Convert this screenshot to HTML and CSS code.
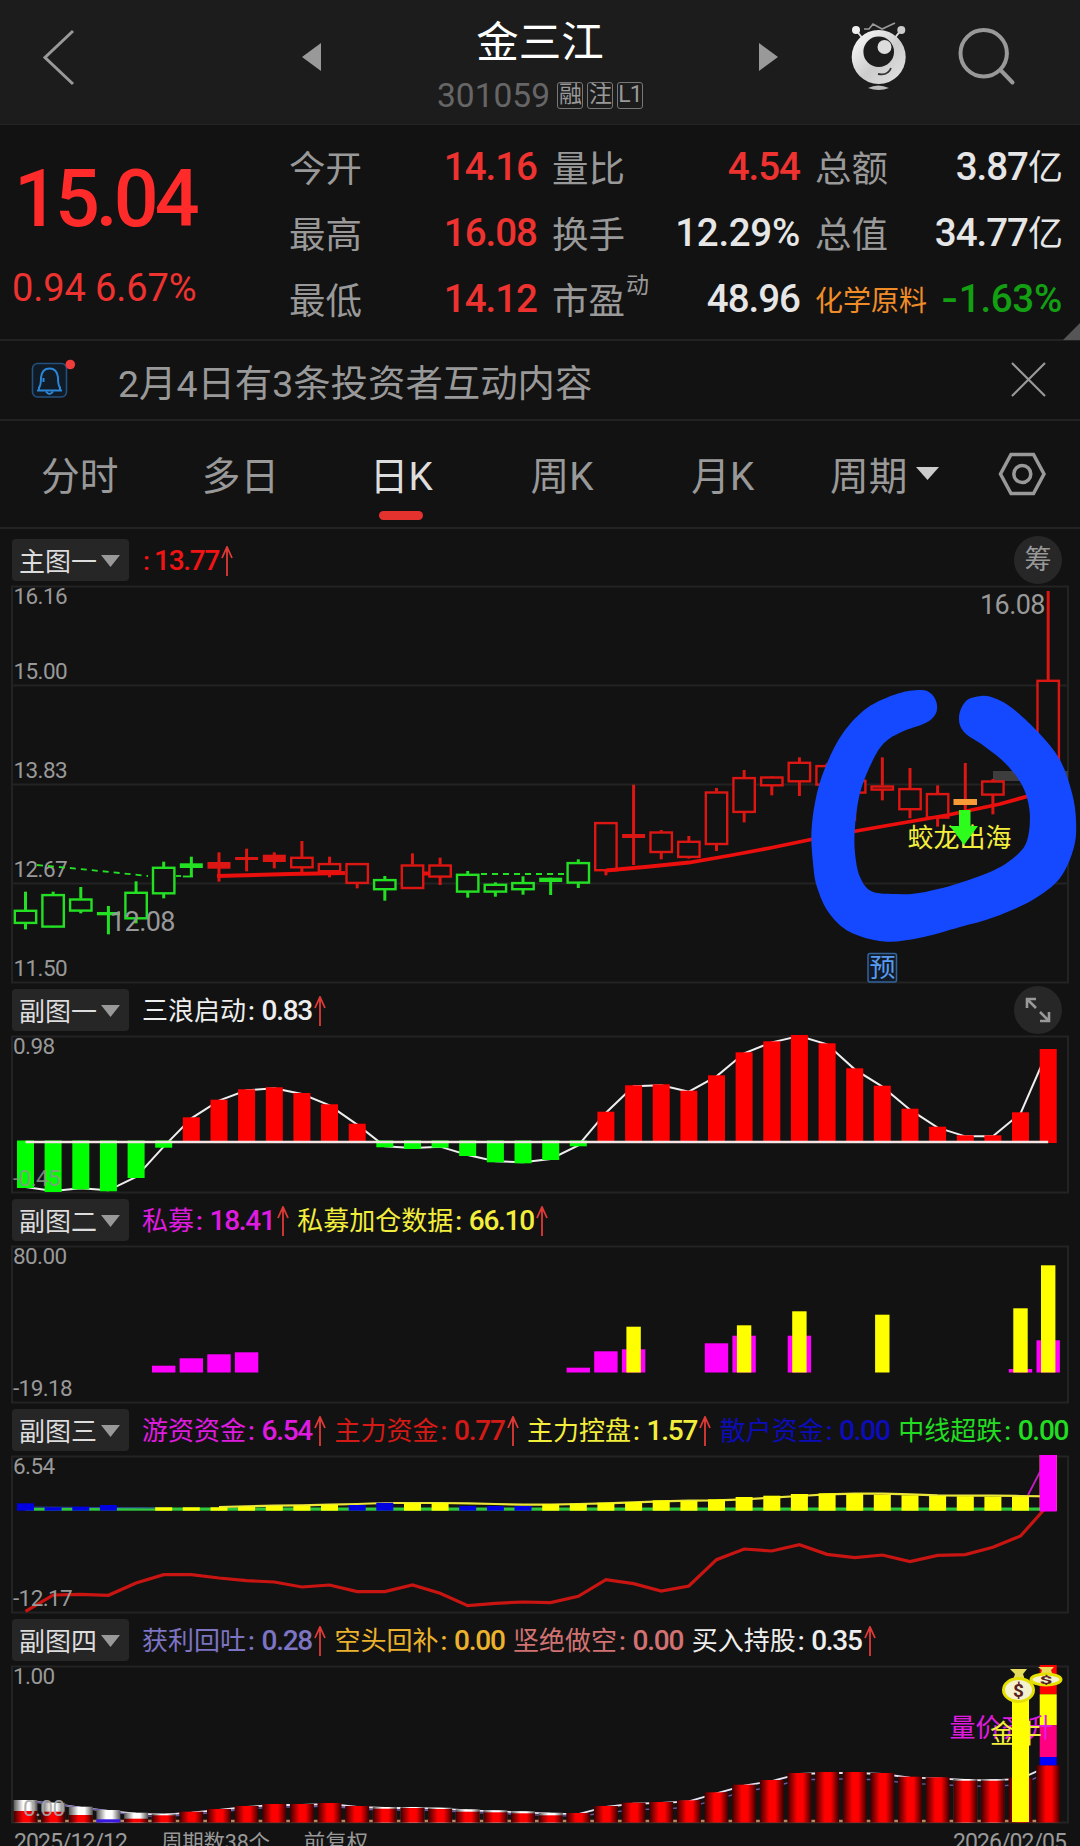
FILE: index.html
```
<!DOCTYPE html>
<html lang="zh-CN">
<head>
	<meta charset="utf-8">
	<title>金三江 301059</title>
	<link rel="stylesheet" href="styles.css">
</head>
<body>

<header class="topbar">
	<svg class="back" width="34" height="60" viewBox="41 27 34 60"><path d="M72 31L44 57.5L72 84"/></svg>
	<svg class="step prev" width="20" height="30" viewBox="0 0 20 30"><path d="M19 1v28L0 15z"/></svg>
	<div class="stock">
		<h1>金三江</h1>
		<div class="code"><span>301059</span><i>融</i><i>注</i><i>L1</i></div>
	</div>
	<svg class="step next" width="20" height="30" viewBox="0 0 20 30"><path d="M1 1v28l19-14z"/></svg>
	<svg class="robot" width="60" height="72" viewBox="850 22 60 72">
		<defs>
			<linearGradient id="shell" x1="0" y1="0" x2="1" y2="1">
				<stop offset="0" stop-color="#fff"/>
				<stop offset=".55" stop-color="#ccc"/>
				<stop offset="1" stop-color="#e4e4e4"/>
			</linearGradient>
		</defs>
		<path d="M857 31l7 9M902 31l-7 9" stroke="#ddd" stroke-width="2"/>
		<path d="M865 30h5l4-5 9 5 13-6" fill="none" stroke="#999" stroke-width="1.6"/>
		<circle cx="857" cy="31" r="4" fill="#eee"/>
		<circle cx="902.3" cy="31" r="4" fill="#ccc"/>
		<circle cx="879.7" cy="58" r="27" fill="url(#shell)"/>
		<circle cx="879.7" cy="52.7" r="15.3" fill="#1c1c1c"/>
		<circle cx="885.5" cy="48" r="7" fill="#ddd"/>
		<path d="M879 75q10 2 13-6" fill="none" stroke="#333" stroke-width="1.8"/>
		<path d="M869 89q10-5 21 0q-10 4-21 0z" fill="#bbb"/>
	</svg>
	<svg class="search" width="62" height="62" viewBox="956 27 62 62"><circle cx="983.7" cy="54.3" r="23.2"/><path d="M1000.5 71l12 12.5"/></svg>
</header>

<section class="quote">
	<div class="price">
		<b>15.04</b>
		<span>0.94 6.67%</span>
	</div>
	<dl class="stats">
		<div><dt>今开</dt><dd class="up">14.16</dd></div>
		<div><dt>量比</dt><dd class="up">4.54</dd></div>
		<div><dt>总额</dt><dd>3.87<small>亿</small></dd></div>
		<div><dt>最高</dt><dd class="up">16.08</dd></div>
		<div><dt>换手</dt><dd class="pct">12.29%</dd></div>
		<div><dt>总值</dt><dd>34.77<small>亿</small></dd></div>
		<div><dt>最低</dt><dd class="up">14.12</dd></div>
		<div><dt>市盈<sup>动</sup></dt><dd>48.96</dd></div>
		<div><dt class="sector">化学原料</dt><dd class="down pct"><u>-</u>1.63%</dd></div>
	</dl>
	<svg class="corner" width="17" height="17" viewBox="0 0 17 17"><path d="M17 0v17H0z"/></svg>
</section>

<section class="notice">
	<svg width="46" height="42" viewBox="30 357 46 42">
		<rect x="32.5" y="362.5" width="34" height="33.5" rx="5" fill="#111b26" stroke="#24507d" stroke-width="1.6"/>
		<g fill="none" stroke="#2c86d8" stroke-width="2">
			<path d="M37 389.500h25M39 389.500v-3q2-2 2-10q1-9 8.500-9q7.500 0 8.500 9q0 8 2 10v3M43.500 381v-4"/>
			<path d="M46 390.500q3.500 5 7 0"/>
		</g>
		<circle cx="70.300" cy="363.500" r="4.800" fill="#f03c3a"/>
	</svg>
	<p>2月4日有3条投资者互动内容</p>
	<svg class="close" width="35" height="35" viewBox="0 0 35 35"><path d="M1 1l33 33M34 1L1 34"/></svg>
</section>

<nav class="tabs">
	<a>分时</a>
	<a>多日</a>
	<a class="active">日K</a>
	<a>周K</a>
	<a>月K</a>
	<a class="period">周期<svg width="23" height="13" viewBox="0 0 23 13"><path d="M0 0h23L11.500 13z"/></svg></a>
	<svg class="gear" width="48" height="46" viewBox="998 452 48 46"><path d="M1011 455.500h22.500L1044 475l-10.500 19.500H1011L1000.500 475z"/><circle cx="1022.300" cy="475" r="8.500"/></svg>
</nav>

<main>
	<section class="panel">
		<header class="first">
			<button>主图一<svg class="tri" width="19" height="12" viewBox="0 0 19 12"><path d="M0 0h19L9.500 12z"/></svg></button>
			<ul><li class="c-red nameless"><em>:</em><b>13.77</b><svg class="arrow" width="12" height="30" viewBox="0 0 12 30"><path d="M6 30V1M1 12L6 1l5 11"/></svg></li></ul>
			<span class="round">筹</span>
		</header>
		<svg class="chart" width="1080" height="398" viewBox="0 585 1080 398">
			<rect class="frame" x="12" y="586.500" width="1056" height="396"/>
			<path class="grid" d="M12 685.500H1068M12 784.500H1068M12 883.500H1068"/>
			<g class="axis"><text x="13.500" y="604">16.16</text><text x="13.500" y="679">15.00</text><text x="13.500" y="778">13.83</text><text x="13.500" y="877">12.67</text><text x="13.500" y="976">11.50</text></g>
			<g id="candles"></g>
			<g class="peak"><text x="110" y="931">12.08</text><text x="980" y="613.500">16.08</text></g>
			<text class="tag" x="907.500" y="847" fill="#f3ee3c">蛟龙出海</text>
			<path d="M959 810h11.500v16h7.500L964 845l-14-19h9z" fill="#2dfc1d"/>
			<path id="scribble" fill="#1549ff"/>
			<rect x="868" y="953.500" width="28.500" height="28.500" rx="2" fill="#111b28" stroke="#34639b" stroke-width="1.500"/>
			<text class="tag" x="869.500" y="977" fill="#5a9bee">预</text>
		</svg>
	</section>

	<section class="panel">
		<header>
			<button>副图一<svg class="tri" width="19" height="12" viewBox="0 0 19 12"><path d="M0 0h19L9.500 12z"/></svg></button>
			<ul><li class="c-white">三浪启动<em>:</em><b>0.83</b><svg class="arrow" width="12" height="30" viewBox="0 0 12 30"><path d="M6 30V1M1 12L6 1l5 11"/></svg></li></ul>
			<span class="round"><svg width="26" height="26" viewBox="0 0 26 26"><path d="M11 2H2v9M2 2l9 9M24 15v9h-9M24 24l-9-9"/></svg></span>
		</header>
		<svg class="chart" width="1080" height="158" viewBox="0 1035 1080 158">
			<rect class="frame" x="12" y="1036.500" width="1056" height="156"/>
			<g id="wave"></g>
			<g class="axis"><text x="13" y="1054">0.98</text><text class="faded" x="13" y="1186">-0.45</text></g>
		</svg>
	</section>

	<section class="panel">
		<header>
			<button>副图二<svg class="tri" width="19" height="12" viewBox="0 0 19 12"><path d="M0 0h19L9.500 12z"/></svg></button>
			<ul>
				<li class="c-magenta">私募<em>:</em><b>18.41</b><svg class="arrow" width="12" height="30" viewBox="0 0 12 30"><path d="M6 30V1M1 12L6 1l5 11"/></svg></li>
				<li class="c-yellow">私募加仓数据<em>:</em><b>66.10</b><svg class="arrow" width="12" height="30" viewBox="0 0 12 30"><path d="M6 30V1M1 12L6 1l5 11"/></svg></li>
			</ul>
		</header>
		<svg class="chart" width="1080" height="158" viewBox="0 1245 1080 158">
			<rect class="frame" x="12" y="1246.500" width="1056" height="156"/>
			<g id="private"></g>
			<g class="axis"><text x="13" y="1264">80.00</text><text x="13" y="1396">-19.18</text></g>
		</svg>
	</section>

	<section class="panel">
		<header>
			<button>副图三<svg class="tri" width="19" height="12" viewBox="0 0 19 12"><path d="M0 0h19L9.500 12z"/></svg></button>
			<ul>
				<li class="c-magenta">游资资金<em>:</em><b>6.54</b><svg class="arrow" width="12" height="30" viewBox="0 0 12 30"><path d="M6 30V1M1 12L6 1l5 11"/></svg></li>
				<li class="c-darkred">主力资金<em>:</em><b>0.77</b><svg class="arrow" width="12" height="30" viewBox="0 0 12 30"><path d="M6 30V1M1 12L6 1l5 11"/></svg></li>
				<li class="c-yellow">主力控盘<em>:</em><b>1.57</b><svg class="arrow" width="12" height="30" viewBox="0 0 12 30"><path d="M6 30V1M1 12L6 1l5 11"/></svg></li>
				<li class="c-blue">散户资金<em>:</em><b>0.00</b></li>
				<li class="c-green">中线超跌<em>:</em><b>0.00</b></li>
			</ul>
		</header>
		<svg class="chart" width="1080" height="158" viewBox="0 1455 1080 158">
			<rect class="frame" x="12" y="1456.500" width="1056" height="156"/>
			<g id="funds"></g>
			<g class="axis"><text x="13" y="1474">6.54</text><text x="13" y="1606">-12.17</text></g>
		</svg>
	</section>

	<section class="panel">
		<header>
			<button>副图四<svg class="tri" width="19" height="12" viewBox="0 0 19 12"><path d="M0 0h19L9.500 12z"/></svg></button>
			<ul>
				<li class="c-purple">获利回吐<em>:</em><b>0.28</b><svg class="arrow" width="12" height="30" viewBox="0 0 12 30"><path d="M6 30V1M1 12L6 1l5 11"/></svg></li>
				<li class="c-gold">空头回补<em>:</em><b>0.00</b></li>
				<li class="c-rose">坚绝做空<em>:</em><b>0.00</b></li>
				<li class="c-white">买入持股<em>:</em><b>0.35</b><svg class="arrow" width="12" height="30" viewBox="0 0 12 30"><path d="M6 30V1M1 12L6 1l5 11"/></svg></li>
			</ul>
		</header>
		<svg class="chart" width="1080" height="158" viewBox="0 1665 1080 158">
			<defs>
				<linearGradient id="redbar">
					<stop offset="0" stop-color="#3a0000"/>
					<stop offset=".4" stop-color="#f00"/>
					<stop offset=".65" stop-color="#f00"/>
					<stop offset="1" stop-color="#3a0000"/>
				</linearGradient>
				<linearGradient id="whitebar">
					<stop offset="0" stop-color="#555"/>
					<stop offset=".4" stop-color="#fff"/>
					<stop offset=".65" stop-color="#fff"/>
					<stop offset="1" stop-color="#555"/>
				</linearGradient>
			</defs>
			<rect class="frame" x="12" y="1666.500" width="1056" height="156"/>
			<g id="holding"></g>
			<text class="tag" x="949.500" y="1737" fill="#e01be0">量价齐升</text>
			<text class="tag" x="990" y="1743" fill="#f3ee3c">金牛</text>
			<rect x="1012" y="1700" width="17" height="122" fill="#ff0"/>
			<g class="bag">
				<path d="M1010 1669h17l-4 5 2 6h-12l2-6z"/>
				<ellipse cx="1018.500" cy="1690" rx="15" ry="11.500"/>
				<text x="1018.500" y="1696.500">$</text>
			</g>
			<g class="bag">
				<path d="M1038 1667h16l-3 3 1 3h-11l1-3z"/>
				<ellipse cx="1046" cy="1679.500" rx="15" ry="5.500"/>
				<text transform="translate(1046 1683.500) scale(1.200 .6)">$</text>
			</g>
			<g class="axis"><text x="13" y="1684">1.00</text><text class="zero" x="23" y="1816">0.00</text></g>
		</svg>
	</section>
</main>

<footer>
	<span>2025/12/12</span>
	<span class="cn">周期数38个</span>
	<span class="cn">前复权</span>
	<span class="end">2026/02/05</span>
</footer>

<script src="charts.js"></script>
</body>
</html>
```
FILE: styles.css
```
* {
	box-sizing: border-box;
	margin: 0;
	padding: 0;
}

body {
	width: 1080px;
	height: 1846px;
	overflow: hidden;
	background: #121212;
	color: #999;
	font-family: Roboto, "Noto Sans CJK SC", sans-serif;
}

svg {
	display: block;
	flex: none;
}

/* top bar */
.topbar {
	display: flex;
	align-items: center;
	height: 125px;
	padding: 0 62px 0 42px;
	background: #1c1c1c;
	border-bottom: 1px solid #242424;
}

.topbar > svg {
	margin-bottom: 10px;
}

.back path {
	fill: none;
	stroke: #999;
	stroke-width: 3;
}

.step {
	fill: #999;
}

.prev {
	margin-left: 226px;
}

.stock {
	width: 436px;
	padding-top: 7px;
	text-align: center;
}

.stock h1 {
	height: 60px;
	color: #fff;
	font-size: 42.5px;
	font-weight: 400;
	line-height: 44px;
}

.code {
	display: flex;
	justify-content: center;
	align-items: center;
	gap: 4px;
	height: 30px;
	color: #666;
	font-size: 33.5px;
	line-height: 30px;
}

.code span {
	margin-right: 3px;
}

.code i {
	width: 26px;
	height: 27px;
	border: 1.5px solid #777;
	border-radius: 3px;
	color: #999;
	font-size: 23px;
	font-style: normal;
	line-height: 24px;
	letter-spacing: -1px;
}

.robot {
	margin-left: 71px;
}

.search {
	margin-left: auto;
	fill: none;
	stroke: #999;
	stroke-width: 4;
	stroke-linecap: round;
}

/* quote */
.quote {
	display: flex;
	position: relative;
	height: 216px;
	border-bottom: 2px solid #232323;
}

.price {
	width: 289px;
	padding: 33px 0 0 14px;
	color: #ff2b2b;
}

.price b {
	display: block;
	height: 91px;
	font-size: 79px;
	font-weight: 500;
	line-height: 82px;
	letter-spacing: -4px;
}

.price span {
	display: block;
	margin-left: -2px;
	color: #ee3230;
	font-size: 38px;
	line-height: 78px;
	letter-spacing: -.1px;
}

.stats {
	display: grid;
	grid-template-columns: 248px 248px 247px;
	grid-auto-rows: 66px;
	column-gap: 15px;
	padding-top: 12px;
}

.stats div {
	display: flex;
	justify-content: space-between;
	line-height: 66px;
	white-space: nowrap;
}

.stats dt {
	position: relative;
	font-size: 36.5px;
}

.stats dt sup {
	position: absolute;
	top: -16px;
	left: 74px;
	font-size: 23px;
}

.stats .sector {
	color: #f08c28;
	font-size: 28px;
}

.stats dd {
	margin-top: -3px;
	color: #e6e6e6;
	font-size: 38.5px;
	font-weight: 500;
	letter-spacing: -1px;
}

.stats dd small {
	font-size: 35px;
	font-weight: 400;
}

.stats dd.pct {
	letter-spacing: -.3px;
}

.stats dd u {
	display: inline-block;
	margin-right: 3px;
	text-decoration: none;
	transform: scaleX(1.25);
}

.stats .up {
	color: #ee3230;
}

.stats .down {
	color: #12a012;
}

.corner {
	position: absolute;
	right: 0;
	bottom: -1px;
	fill: #555;
}

/* notice */
.notice {
	display: flex;
	align-items: center;
	height: 80px;
	padding: 0 34px 2px 30px;
	border-bottom: 2px solid #232323;
}

.notice p {
	margin: 3px 0 0 42px;
	font-size: 37.4px;
}

.notice .close {
	margin-left: auto;
	stroke: #999;
	stroke-width: 2.2;
}

/* tabs */
.tabs {
	display: flex;
	align-items: center;
	height: 108px;
	border-bottom: 2px solid #232323;
}

.tabs a {
	display: flex;
	position: relative;
	justify-content: center;
	width: 160.8px;
	margin-top: -2px;
	padding-right: 1.5px;
	font-size: 38.7px;
}

.tabs .active {
	color: #ddd;
}

.tabs .active::after {
	content: "";
	position: absolute;
	bottom: -19px;
	width: 44px;
	height: 9px;
	border-radius: 5px;
	background: #e6322f;
}

.tabs .period {
	align-items: center;
	justify-content: flex-start;
	gap: 9px;
	width: 167px;
	padding-left: 26px;
}

.period svg {
	fill: #ccc;
}

.gear {
	margin-left: 27px;
	fill: none;
	stroke: #999;
	stroke-width: 3.5;
}

/* indicator panels */
.panel > header {
	display: flex;
	align-items: center;
	height: 52px;
	padding: 1px 18px 0 12px;
}

.panel > .first {
	height: 56px;
	padding-top: 6px;
}

.panel button {
	display: flex;
	flex: none;
	align-items: center;
	gap: 4px;
	width: 117px;
	height: 42px;
	padding-left: 7px;
	border: 0;
	border-radius: 4px;
	background: #262626;
	color: #ddd;
	font: 26px/42px "Noto Sans CJK SC", sans-serif;
	white-space: nowrap;
}

.tri {
	margin-top: 2px;
	fill: #999;
}

.panel ul {
	display: flex;
	gap: 8.5px;
	margin-left: 13px;
	list-style: none;
}

.panel li {
	display: flex;
	align-items: center;
	height: 40px;
	padding-top: 2px;
	font-size: 26px;
	line-height: 40px;
	white-space: nowrap;
}

.panel li em {
	width: 15.5px;
	padding-left: 2px;
	font-style: normal;
	font-weight: 500;
}

.panel li b {
	font-size: 28px;
	font-weight: 500;
	letter-spacing: -1.25px;
}

.panel li.nameless em {
	width: 12px;
	padding-left: 1px;
}

.arrow {
	margin-left: 2px;
	fill: none;
	stroke: #e03a36;
	stroke-width: 1.8;
}

.c-red { color: #f01414; }
.c-white { color: #eee; }
.c-magenta { color: #e01be0; }
.c-yellow { color: #f3ee3c; }
.c-darkred { color: #d41a16; }
.c-blue { color: #0c0cb8; }
.c-green { color: #22dd22; }
.c-purple { color: #7d74c4; }
.c-gold { color: #ecb22e; }
.c-rose { color: #d27272; }

.round {
	display: flex;
	flex: none;
	align-items: center;
	justify-content: center;
	width: 48px;
	height: 48px;
	margin-left: auto;
	border-radius: 50%;
	background: #272727;
	font-size: 27px;
	line-height: 48px;
}

.round svg {
	fill: none;
	stroke: #999;
	stroke-width: 2.6;
}

.chart {
	overflow: visible;
}

.frame,
.grid {
	fill: none;
	stroke: #232323;
	stroke-width: 2;
}

.axis {
	fill: #999;
	font-size: 22.5px;
	letter-spacing: -.6px;
}

.faded {
	fill: #8c968c;
	opacity: .85;
}

.zero {
	fill: #aaa;
	opacity: .9;
}

.peak {
	fill: #999;
	font-size: 27px;
	letter-spacing: -.6px;
}

.tag {
	font-size: 26px;
}

.bag {
	fill: #f4f1cf;
	stroke: #e6e000;
	stroke-width: 3;
}

.bag path {
	fill: #e6de5a;
	stroke: none;
}

.bag text {
	fill: #5a2020;
	stroke: none;
	font-size: 19px;
	font-weight: 700;
	text-anchor: middle;
}

footer {
	display: flex;
	height: 23px;
	padding: 6px 14px 0 14px;
	font-size: 23px;
	line-height: 28px;
	letter-spacing: -.95px;
	white-space: nowrap;
}

footer .cn {
	margin-left: 34px;
	font-size: 21.5px;
	letter-spacing: -.2px;
}

footer .end {
	margin-left: auto;
}
```
FILE: charts.js
```
var STEP = 27.64, LEFT = 25.5;

function cx(i) {
	return LEFT + STEP * i;
}

function rect(x, y, w, h, attrs) {
	return '<rect x="' + x.toFixed(1) + '" y="' + y.toFixed(1) + '" width="' + w + '" height="' + h.toFixed(1) + '" ' + attrs + '/>';
}

function bar(i, top, base, w, color) {
	return rect(cx(i) - w / 2, Math.min(top, base), w, Math.abs(base - top), 'fill="' + color + '"');
}

function line(points, color, width, extra) {
	return '<polyline points="' + points.join(' ') + '" fill="none" stroke="' + color + '" stroke-width="' + width + '" ' + (extra || '') + '/>';
}

function series(ys, first) {
	return ys.map(function(y, i) {
		return [cx(i + (first || 0)), y];
	});
}

function draw(id, html) {
	document.getElementById(id).innerHTML = html;
}

// y positions are kept in thirds of a pixel from the panel origin
function third(origin) {
	return function(v) {
		return origin + v / 3;
	};
}

/* candles: color, high, body top, body bottom, low */
(function() {
	var y = third(580), G = '#23e023', R = '#dc1612', out = '';
	var data = [
		[G,935,990,1027,1048],[G,935,943,1038,1042],[G,921,956,990,1000],[G,978,999,1003,1063],
		[G,904,936,1013,1030],[G,845,861,938,955],[G,830,853,861,888],[R,817,849,863,905],
		[R,806,834,837,874],[R,817,827,843,865],[R,783,831,860,876],[R,830,850,872,892],
		[R,850,850,907,925],[G,888,898,926,962],[R,820,854,922,925],[R,833,854,888,915],
		[G,873,882,933,953],[G,907,912,933,950],[G,889,907,926,944],[G,893,896,903,945],
		[G,838,847,906,924],[R,727,727,869,886],[R,614,765,771,855],[R,750,755,814,838],
		[R,768,783,829,836],[R,624,635,790,813],[R,570,592,694,727],[R,588,590,614,646],
		[R,532,546,602,648],[R,550,556,612,620],[R,590,600,636,722],[R,532,617,627,661],
		[R,564,625,686,715],[R,616,640,711,740],null,[R,597,602,642,703],
		null,[R,33,300,548,548]
	];

	out += rect(993, 771, 75, 10, 'fill="#3d3d3d"');
	out += line([[37,865],[70,868],[110,872],[148,876]], G, 1.8, 'stroke-dasharray="6 5"');
	out += line([[176,876],[181,876]], G, 1.8) + line([[183,876.5],[193,876.5]], G, 1.8);
	out += line([[481,874],[566,874]], G, 1.8, 'stroke-dasharray="6 5"');

	data.forEach(function(c, i) {
		if (!c) return;
		var x = cx(i), solid = c[3] - c[2] < 9 || i == 7 || i == 9;
		out += line([[x,y(c[1])],[x,y(c[2])]], c[0], 3) + line([[x,y(c[3])],[x,y(c[4])]], c[0], 3);
		if (solid) {
			out += rect(x - 11.5, y(c[2]) - 1, 23, y(c[3]) - y(c[2]) + 2, 'fill="' + c[0] + '"');
		} else {
			out += rect(x - 10.7, y(c[2]) + .8, 21.4, y(c[3]) - y(c[2]) - .2, 'fill="#121212" stroke="' + c[0] + '" stroke-width="2.4"');
		}
	});

	out += line([[965.3,763],[965.3,812]], R, 3) + rect(953.5, 799, 23.5, 6, 'fill="#f79a38"');
	out += line([[217,876],[290,874],[345,873]], '#ea0f0d', 4) + line([[424,873.5],[430,873.5]], '#ea0f0d', 4);
	out += line([[606,870.5],[650,866.5],[689,862.5],[730,855.5],[770,848],[811,839.5],[856,831],[948,815],[1000,804],[1050,790]], '#ea0f0d', 3.8);
	draw('candles', out);
})();

/* hand drawn circle, closed curve through the points */
(function() {
	var p = [
		[922,690],[898,693.5],[867,708],[843,733],[827.5,762],[817,793],[811.5,830],[813,863],[817,887],[829,913],
		[850,932],[884,941.5],[919,938],[960,927],[994.5,917],[1032.5,900],[1060,878],[1074,847],[1076,820],[1072,793],
		[1060,760],[1039,733],[1012,708],[994,698],[981,696],[966,701],[959,717],[964,732],[984,746],[1005,763],
		[1022,785],[1029.5,810],[1028,837],[1019,853],[994.5,870],[953,885],[919,893],[898,894],[872,891.5],[860,877],
		[855,853],[855,827],[860,793],[872,762],[884,743],[901.5,732],[925.5,723],[935,715],[937,705],[932.5,695]
	];
	var n = p.length, d = 'M' + p[0];
	for (var i = 0; i < n; i++) {
		var a = p[(i + n - 1) % n], b = p[i], c = p[(i + 1) % n], e = p[(i + 2) % n];
		d += 'C' + [b[0] + (c[0] - a[0]) / 6, b[1] + (c[1] - a[1]) / 6, c[0] - (e[0] - b[0]) / 6, c[1] - (e[1] - b[1]) / 6, c[0], c[1]].join(' ');
	}
	document.getElementById('scribble').setAttribute('d', d + 'z');
})();

/* wave histogram */
(function() {
	var y = third(980), base = 1142, out = '';
	var tops = [624,636,628,634,594,503,412,359,328,322,339,373,431,502,507,503,528,547,550,540,499,395,316,313,332,286,217,184,165,190,265,317,386,440,466,466,397,207].map(y);
	out += line(series(tops.map(function(v) { return v > base ? v - 1 : v + 1; })), '#eee', 2);
	tops.forEach(function(v, i) {
		out += v > base ? bar(i, v, base - 1.5, 17, '#0f0') : bar(i, v, base + 1, 17, '#f00');
	});
	out += line([[cx(0),base],[cx(37),base]], '#f4e4e4', 2.4);
	draw('wave', out);
})();

/* private fund bars: index, magenta top, yellow top */
(function() {
	var y = third(1190), base = 1372.5, out = '';
	[
		[5,527],[6,505],[7,493],[8,487],[20,533],[21,484],[22,478,410],[25,460],[26,437,406],
		[28,437,364],[31,0,374],[36,537,355],[37,451,226]
	].forEach(function(r) {
		if (r[1]) out += bar(r[0], y(r[1]), base, 23.4, '#f0f');
		if (r[2]) out += bar(r[0], y(r[2]), base, 14.4, '#ff0');
	});
	draw('private', out);
})();

/* fund flow */
(function() {
	var y = third(1400), base = 1510.7, out = '', blue = [0, 1, 2, 3, 12, 13, 16, 17, 18];
	var tops = [310,322,320,315,324,322,322,322,320,318,317,314,315,308,309,309,318,318,318,313,311,308,306,301,303,298,291,287,282,280,281,284,286,288,289,290,290,165].map(y);
	var flow = [634,585,583,586,549,524,524,534,542,546,561,555,575,575,555,580,617,610,606,608,589,539,551,573,558,479,447,453,434,463,473,465,485,466,464,442,408,315].map(y);
	out += rect(cx(0), 1507.5, 1020, 3.2, 'fill="#2fc83c"');
	out += line([[cx(0),1507],[cx(5),1508]], '#2a3fa0', 1);
	out += line(series([321,319,317,316,314,312,309,309,309,310,312,314,314,312,310,307,304,302,301,298,293,288,283,281,281,283,286,287,287,288,289].map(y), 7), '#ece63a', 2.2);
	out += line(series(flow), '#c81512', 3.2);
	tops.forEach(function(v, i) {
		if (i == 4) return;
		out += bar(i, v, base, 17, blue.indexOf(i) >= 0 ? '#0000e0' : '#ff0');
	});
	out += line([[1028,1495],[1042,1468]], '#c41cc4', 1.8);
	out += bar(37, 1455, 1511.5, 17, '#f0f');
	draw('funds', out);
})();

/* holding cylinders */
(function() {
	var y = third(1610), base = 1822.5, out = '';
	var red = [603,605,615,0,626,616,605,597,588,582,582,579,588,596,594,597,605,607,610,616,609,588,578,576,571,547,524,510,489,486,486,489,500,502,512,512,503,466];
	var white = {0:570, 1:578, 2:590, 3:600, 4:608, 5:611, 13:591, 14:591, 15:593, 16:598, 17:601, 18:604, 19:608, 34:507, 35:508};
	var edge = red.map(function(v, i) { return y((white[i] || v) + 3); });
	out += line(series(edge), '#ece4f4', 1.8);
	out += line(series(edge.map(function(v, i) { return i < 4 ? v : Math.min(v + (i > 20 ? 6 : 2), 1819); })), '#6a5aa8', 1.4);
	out += line([[15,1821],[1060,1821]], '#b98a62', 2.5);
	red.forEach(function(v, i) {
		if (white[i]) out += bar(i, y(white[i]), base, 24, 'url(#whitebar)');
		if (i == 3) out += bar(i, y(628), base, 24, '#3a18e0');
		else out += bar(i, y(v), base, 24, 'url(#redbar)');
	});
	out += bar(37, 1665, 1694.3, 17, '#f00') + bar(37, 1694.3, 1725.3, 17, '#ff0');
	out += bar(37, 1725.3, 1757, 17, '#ff0080') + bar(37, 1757, 1765.3, 17, '#00f');
	draw('holding', out);
})();
```
